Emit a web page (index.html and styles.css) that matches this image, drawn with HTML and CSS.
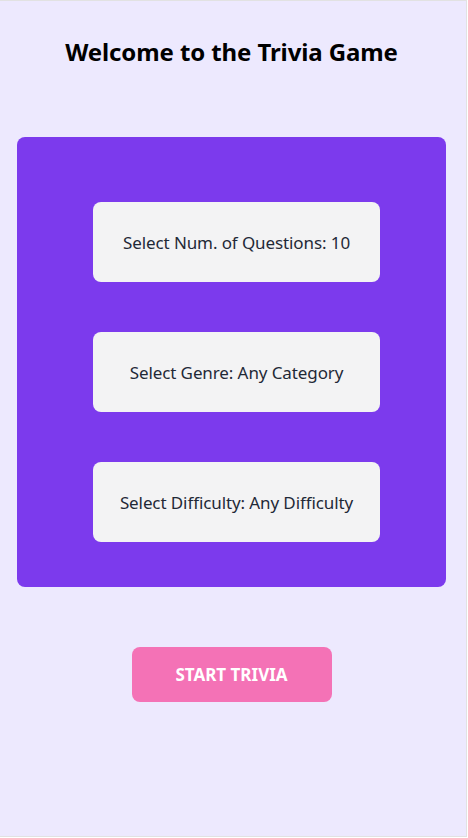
FILE: index.html
```html
<!DOCTYPE html>
<html lang="en">
<head>
<meta charset="utf-8">
<title>Trivia Game</title>
<link rel="stylesheet" href="styles.css">
</head>
<body>
<div class="frame">
  <h1 class="title">Welcome to the Trivia Game</h1>
  <div class="panel">
    <button class="option">Select Num. of Questions: 10</button>
    <button class="option">Select Genre: Any Category</button>
    <button class="option">Select Difficulty: Any Difficulty</button>
  </div>
  <div class="actions">
    <button class="start">START TRIVIA</button>
  </div>
</div>
</body>
</html>
```

FILE: styles.css
```css
html, body {
  margin: 0;
  padding: 0;
  background: #ffffff;
}
body {
  font-family: "Noto Sans", "Open Sans", sans-serif;
}
.frame {
  box-sizing: border-box;
  width: 467px;
  height: 837px;
  background: #ede9fe;
  border-top: 1px solid #e2e2e2;
  border-right: 1px solid #e2e2e2;
  border-bottom: 1px solid #e2e2e2;
  display: flex;
  flex-direction: column;
  align-items: center;
}
.title {
  margin: 36px 0 0;
  height: 30px;
  line-height: 30px;
  font-size: 24px;
  font-weight: 700;
  color: #000;
  letter-spacing: -0.1px;
  margin-left: -3px;
}
.panel {
  margin-top: 70px;
  margin-left: -3px;
  box-sizing: border-box;
  width: 429px;
  padding: 65px 0 45px 10px;
  background: #7c3aed;
  border-radius: 8px;
  display: flex;
  flex-direction: column;
  align-items: center;
  gap: 50px;
}
.option {
  width: 287px;
  height: 80px;
  border: none;
  border-radius: 8px;
  background: #f3f3f4;
  color: #1f2937;
  font-family: inherit;
  font-size: 17px;
  letter-spacing: -0.1px;
  padding: 0;
}
.actions {
  margin-top: 60px;
}
.start {
  width: 200px;
  height: 55px;
  border: none;
  border-radius: 8px;
  background: #f472b6;
  color: #fff;
  font-family: inherit;
  font-size: 17px;
  font-weight: 700;
  padding: 0;
  margin-left: -3px;
}
```
